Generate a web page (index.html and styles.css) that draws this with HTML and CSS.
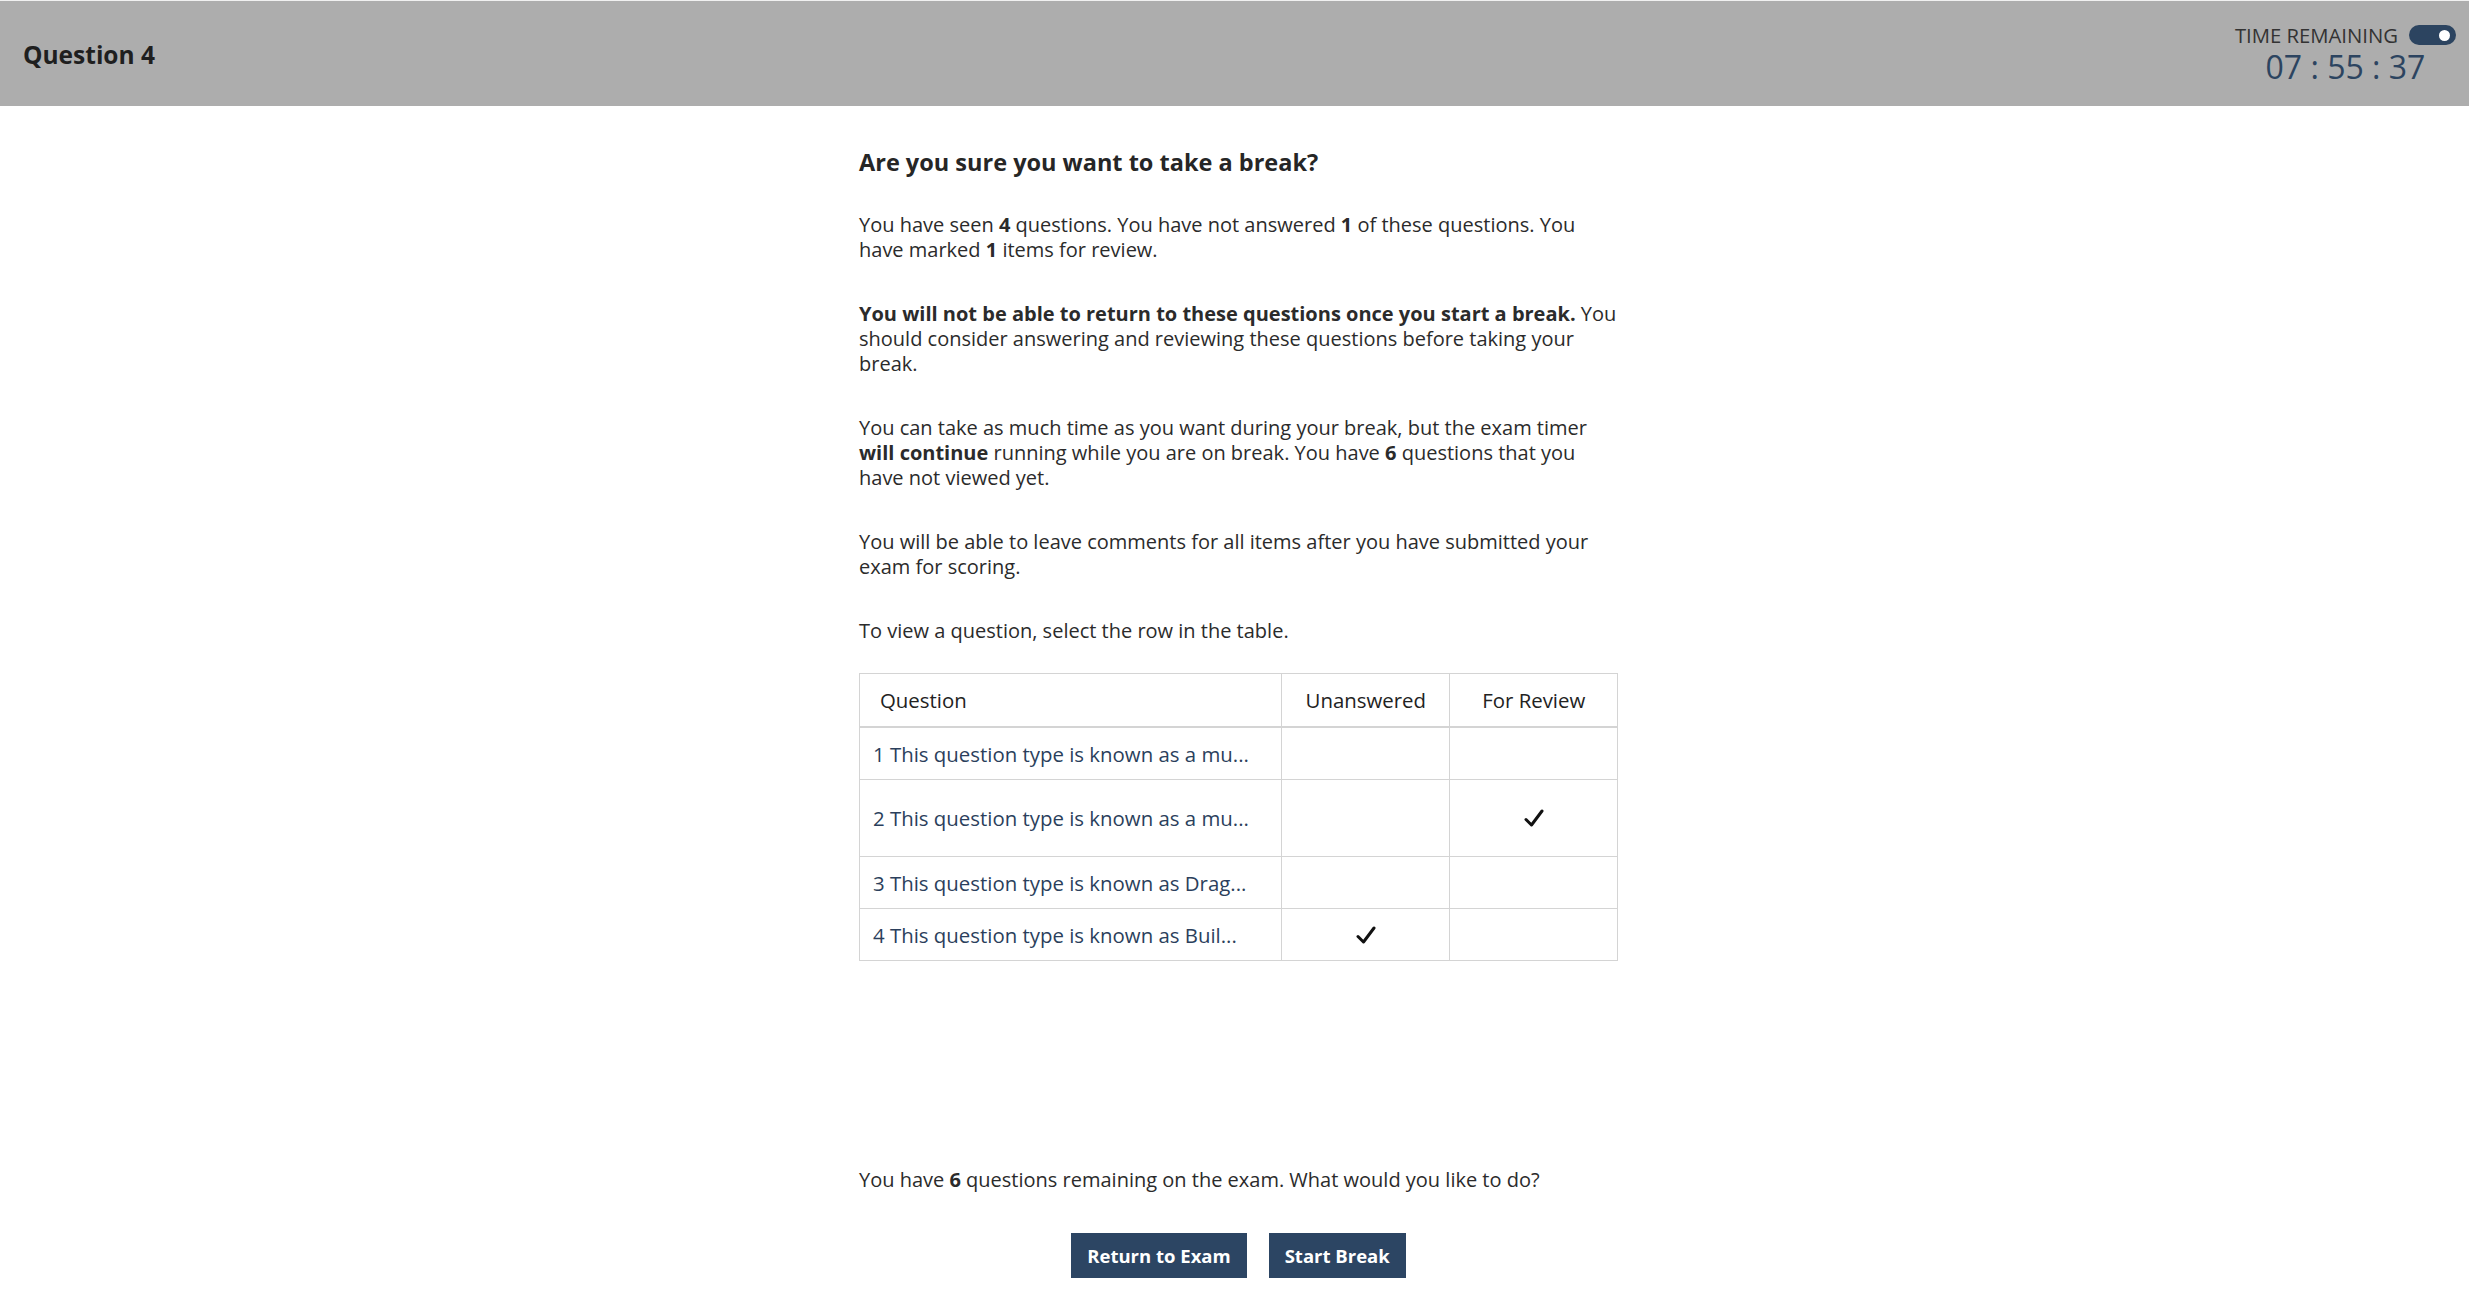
FILE: index.html
```html
<!DOCTYPE html>
<html lang="en">
<head>
    <meta charset="UTF-8">
    <meta name="viewport" content="width=device-width, initial-scale=1.0">
    <title>Break</title>
    <link rel="stylesheet" href="styles.css">
</head>
<body>
<header class="top-bar">
    <div class="item-title">Question 4</div>
    <div class="timer">
        <div class="timer-label">
            <span>TIME REMAINING</span>
            <span class="toggle"><span class="knob"></span></span>
        </div>
        <div class="timer-value">07 : 55 : 37</div>
    </div>
</header>

<main class="content">
    <div class="container">
        <h2>Are you sure you want to take a break?</h2>
        <p>You have seen <b>4</b> questions. You have not answered <b>1</b> of these questions. You have marked <b>1</b> items for review.</p>
        <p><b>You will not be able to return to these questions once you start a break.</b> You should consider answering and reviewing these questions before taking your break.</p>
        <p>You can take as much time as you want during your break, but the exam timer <b>will continue</b> running while you are on break. You have <b>6</b> questions that you have not viewed yet.</p>
        <p>You will be able to leave comments for all items after you have submitted your exam for scoring.</p>
        <p>To view a question, select the row in the table.</p>

        <table class="review-table">
            <thead>
            <tr>
                <th class="col-question">Question</th>
                <th class="col-flag">Unanswered</th>
                <th class="col-flag">For Review</th>
            </tr>
            </thead>
            <tbody>
            <tr>
                <td class="q-text">1 This question type is known as a mu...</td>
                <td></td>
                <td></td>
            </tr>
            <tr class="tall">
                <td class="q-text">2 This question type is known as a mu...</td>
                <td></td>
                <td class="check"><svg width="20" height="18" viewBox="0 0 20 18"><path d="M2 10.5 L7.5 16 L18 2" fill="none" stroke="#111" stroke-width="3" stroke-linecap="round" stroke-linejoin="round"/></svg></td>
            </tr>
            <tr>
                <td class="q-text">3 This question type is known as Drag...</td>
                <td></td>
                <td></td>
            </tr>
            <tr>
                <td class="q-text">4 This question type is known as Buil...</td>
                <td class="check"><svg width="20" height="18" viewBox="0 0 20 18"><path d="M2 10.5 L7.5 16 L18 2" fill="none" stroke="#111" stroke-width="3" stroke-linecap="round" stroke-linejoin="round"/></svg></td>
                <td></td>
            </tr>
            </tbody>
        </table>
    </div>
</main>

<footer class="footer">
    <div class="container">
        <p class="remaining">You have <b>6</b> questions remaining on the exam. What would you like to do?</p>
        <div class="actions">
            <button class="btn">Return to Exam</button>
            <button class="btn">Start Break</button>
        </div>
    </div>
</footer>
</body>
</html>
```

FILE: styles.css
```css
html, body {
    margin: 0;
    padding: 0;
}

body {
    font-family: "Open Sans", "Noto Sans", sans-serif;
    color: #2b2b2b;
    background-color: #fff;
    display: flex;
    flex-direction: column;
    min-height: 100vh;
    border-top: 1px solid #f0f0f0;
    box-sizing: border-box;
}

.top-bar {
    background-color: #adadad;
    height: 105px;
    display: flex;
    align-items: center;
    justify-content: space-between;
    padding: 0 13px 0 23px;
}

.item-title {
    font-size: 24.5px;
    font-weight: 700;
    color: #1f1f1f;
    padding-top: 2px;
}

.timer {
    display: flex;
    flex-direction: column;
    align-items: center;
    align-self: flex-start;
    padding-top: 23px;
}

.timer-label {
    display: flex;
    align-items: center;
    gap: 11px;
    font-size: 20.3px;
    color: #333;
    line-height: 22px;
}

.toggle {
    width: 47px;
    height: 20px;
    border-radius: 10px;
    background-color: #2c4460;
    display: flex;
    align-items: center;
    justify-content: flex-end;
    padding-right: 6px;
    box-sizing: border-box;
}

.knob {
    width: 11px;
    height: 11px;
    border-radius: 50%;
    background-color: #fff;
}

.timer-value {
    font-size: 32px;
    color: #2c4460;
    line-height: 36px;
    margin-top: 3px;
}

.content {
    flex: 1;
    padding-left: 8px;
}

.container {
    width: 759px;
    margin: 0 auto;
}

h2 {
    font-size: 23.5px;
    font-weight: 700;
    margin: 42px 0 36px 0;
    line-height: 28px;
    color: #262626;
}

p {
    font-size: 20px;
    line-height: 25px;
    margin: 0 0 39px 0;
    width: 764px;
}

.content p:last-of-type {
    margin-bottom: 30px;
}

.review-table {
    width: 100%;
    border-collapse: collapse;
    font-size: 20.4px;
}

.review-table th,
.review-table td {
    border: 1px solid #d4d4d4;
}

.review-table th {
    font-weight: 400;
    color: #222;
    height: 50px;
    border-bottom: 2px solid #d4d4d4;
}

.col-question {
    text-align: left;
    padding-left: 20px;
    width: 405px;
}

.col-flag {
    width: 166px;
    text-align: center;
}

.review-table td {
    height: 51px;
    padding: 0;
}

.review-table tr.tall td {
    height: 76px;
}

.q-text {
    color: #2b3f5c;
    padding-left: 13px !important;
}

.check {
    text-align: center;
}

.check svg {
    display: block;
    margin: 0 auto;
}

.footer {
    padding-left: 8px;
    padding-bottom: 36px;
}

.remaining {
    margin: 0 0 41px 0;
}

.actions {
    display: flex;
    justify-content: center;
    gap: 22px;
}

.btn {
    background-color: #2c4563;
    color: #fff;
    font-family: "Open Sans", "Noto Sans", sans-serif;
    font-size: 18.5px;
    font-weight: 700;
    border: none;
    height: 45px;
    padding: 0 16px;
    cursor: pointer;
}
```
